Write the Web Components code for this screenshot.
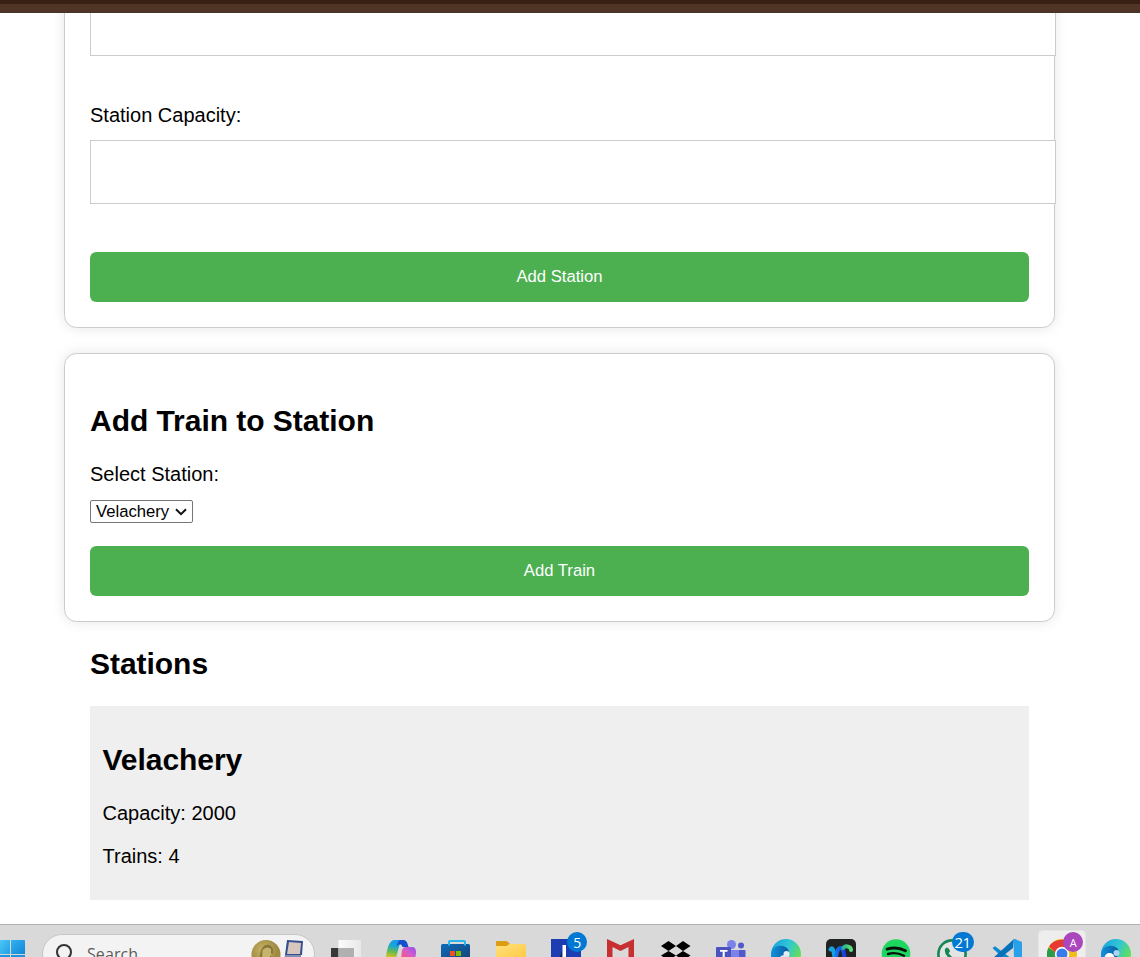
<!DOCTYPE html>
<html lang="en">
<head>
<meta charset="utf-8">
<title>Metro Stations</title>
<style>
html,body{margin:0;height:957px;overflow:hidden;background:#fff}
body{font:20px/23px "Liberation Sans",Arial,sans-serif;color:#000}
</style>
</head>
<body>
<metro-app></metro-app>
<script>
const define = (name, html) => customElements.define(name, class extends HTMLElement {
  constructor() {
    super();
    const t = document.createElement('template');
    t.innerHTML = html;
    this.attachShadow({mode: 'open'}).append(t.content.cloneNode(true));
  }
});

define('browser-edge', `<style>:host{display:block;height:8px;background:#503426;border-top:4px solid #382014;border-bottom:1px solid #49342a;flex:none}</style>`);

define('form-card', `<style>:host{display:block;box-sizing:border-box;width:991px;padding:25px;border:1px solid #ccc;border-radius:12.5px;background:#fff;box-shadow:0 0 12.5px rgba(0,0,0,.1)}</style><slot></slot>`);

define('section-title', `<style>:host{display:block}h2{margin:0;font-size:30px;line-height:34px;font-weight:700;letter-spacing:-.04px}</style><h2><slot></slot></h2>`);

define('number-field', `<style>:host{display:block}label{display:block;min-height:23px;margin-bottom:13px}input{display:block;box-sizing:border-box;width:966px;height:64px;border:1px solid #ccc;background:#fff;padding:12px;font:inherit;outline:0}</style><label><slot></slot></label><input aria-label="value">`);

define('action-button', `<style>:host{display:block}button{display:block;width:100%;height:50px;border:0;border-radius:6.25px;background:#4caf50;color:#fff;font:16.67px/19px "Liberation Sans",Arial,sans-serif;padding:0 0 1px}</style><button><slot></slot></button>`);

define('station-select', `<style>:host{display:flex;box-sizing:border-box;width:103px;height:23px;border:1px solid #767676;border-radius:2px;background:#fff;font-size:16.67px;line-height:21px;padding-left:5px;align-items:center}
svg{margin-left:5px;flex:none}</style><slot></slot><svg width="14" height="10" viewBox="0 0 14 10"><path d="M2 2.200l5 5 5-5" fill="none" stroke="#111" stroke-width="2"/></svg>`);

define('station-entry', `<style>:host{display:block;box-sizing:border-box;width:939px;height:194px;background:#efefef;padding:37px 12.5px 0}
section-title{margin-bottom:25px}p{margin:0 0 20px}</style><section-title><slot name="name"></slot></section-title><p><slot name="capacity"></slot></p><p><slot name="trains"></slot></p>`);

define('count-badge', `<style>:host{position:absolute;left:var(--x);top:8px;width:var(--w,20px);height:20px;border-radius:10px;background:var(--c,#0078d4);color:#fff;font:var(--f,14px)/21px "Open Sans","Noto Sans",sans-serif;text-align:center;letter-spacing:-.5px}</style><slot></slot>`);

const edge = id => `<svg viewBox="0 0 55 33"><defs><linearGradient id="${id}a" x1="0" x2="1" y2=".5"><stop stop-color="#159ddd"/><stop offset=".55" stop-color="#31c6d5"/><stop offset="1" stop-color="#66e052"/></linearGradient><linearGradient id="${id}b" x2="1"><stop stop-color="#1292dc"/><stop offset="1" stop-color="#075aa0"/></linearGradient></defs><circle cx="28" cy="30" r="15" fill="url(#${id}a)"/><path d="M13 31c0-5.500 4-9.200 9.500-9.200 5 0 8.500 3 8.500 7.200l-3 6H13z" fill="url(#${id}b)"/>`;

const icons = [
`<svg viewBox="0 0 55 33"><defs><linearGradient id="tv" x2="1"><stop stop-color="#fbfbfb"/><stop offset="1" stop-color="#e8e8e8"/></linearGradient></defs><path fill="#393735" d="M13 24h23v12H13z"/><path fill="url(#tv)" d="M20.500 16H43v20H20.500z"/><path fill="#b0b0b0" d="M20.500 24H36v12H20.500z"/></svg>`,
`<svg viewBox="0 0 55 33"><defs><linearGradient id="ca" gradientUnits="userSpaceOnUse" x1="24" y1="16" x2="20" y2="35"><stop stop-color="#1597f0"/><stop offset=".35" stop-color="#1ba9d0"/><stop offset=".65" stop-color="#6cb94c"/><stop offset="1" stop-color="#e6c81c"/></linearGradient><linearGradient id="cb" gradientUnits="userSpaceOnUse" x1="41" y1="23" x2="30" y2="35"><stop stop-color="#9a50ea"/><stop offset=".5" stop-color="#d65cc8"/><stop offset="1" stop-color="#f5587c"/></linearGradient></defs><path fill="url(#ca)" d="M13 35c0-7 3-19 8-19h9c-4 3-5 11-7 19z"/><path fill="#1550cc" d="M27 16h3.500c3 0 4 3 5 7h-6c-1-3-3-4-6-.500 1-4 2-6 3.500-6.500z"/><path fill="url(#cb)" d="M32 23h7c4 0 5 4 3 12H28l1-9q1-3 3-3z"/></svg>`,
`<svg viewBox="0 0 55 33"><defs><linearGradient id="st" x2="1" y2="1"><stop stop-color="#0c6bb8"/><stop offset="1" stop-color="#174273"/></linearGradient></defs><rect x="13" y="20" width="29" height="18" rx="1.500" fill="url(#st)"/><path d="M21 21.500V18q0-1 1-1h14q1 0 1 1v3.500" fill="none" stroke="#24b8ed" stroke-width="2"/><path fill="#f25022" d="M22 27h5v5h-5z"/><path fill="#7fba00" d="M28 27h5v5h-5z"/></svg>`,
`<svg viewBox="0 0 55 33"><defs><linearGradient id="fo" x2="1" y2="1"><stop stop-color="#ffe17c"/><stop offset="1" stop-color="#ffc943"/></linearGradient></defs><path fill="#dc9d12" d="M13 35V18q0-1 1-1h9q1 0 2 1l2 2-4 4z"/><path fill="url(#fo)" d="M13 35V22h10q1 0 2-1 1-1 2-1h14q2 0 2 2v13z"/></svg>`,
`<svg viewBox="0 0 55 33"><path fill="#1d3db2" d="M13 15h30v20H13z"/><path fill="#0a2450" d="M22 33l2-6v6z"/><path fill="#fff" d="M24.500 21h3.500v14h-3.500z"/></svg><count-badge style="--x:29px">5</count-badge>`,
`<svg viewBox="0 0 55 33"><path fill="#c72f30" d="M14 35V15l13.500 6.200L41 15v20h-5.500V23l-8 4-8-4v12z"/></svg>`,
`<svg viewBox="0 0 55 33"><path d="M13 22l7.500-5 7.500 5 7-5 7.500 5-7.500 5-7-5-7.500 5zM13 31.500l7.500-4.500 7.500 4.500 7-4.500 7.500 4.500-7.500 5-7-5-7.500 5z"/></svg>`,
`<svg viewBox="0 0 55 33"><circle cx="28.500" cy="20.500" r="4.500" fill="#7b83eb"/><circle cx="38" cy="21.500" r="3" fill="#5059c9"/><rect x="33" y="26" width="9.500" height="12" rx="1" fill="#5059c9"/><path fill="#7b83eb" d="M21 26h15v12H21z"/><rect x="13" y="23" width="15" height="15" rx="1" fill="#4b53bc"/><path fill="#fff" d="M17 26h7.500v1.700h-2.800V34h-2v-6.300H17z"/></svg>`,
edge('e')+`<circle cx="28.500" cy="30" r="3" fill="#e6edf3"/><path d="M22 34q0-3 5-3h4v4h-9z" fill="#dce7f0"/></svg>`,
`<svg viewBox="0 0 55 33"><defs><linearGradient id="we" gradientUnits="userSpaceOnUse" x1="16" y1="0" x2="33" y2="0"><stop stop-color="#14a5e4"/><stop offset=".4" stop-color="#1673f4"/><stop offset="1" stop-color="#1636d8"/></linearGradient><linearGradient id="wg" gradientUnits="userSpaceOnUse" x1="28" y1="0" x2="38" y2="0"><stop stop-color="#1b9f9a"/><stop offset="1" stop-color="#5ce274"/></linearGradient></defs><rect x="13" y="15" width="30" height="30" rx="5" fill="#202222"/><g fill="none" stroke-width="4" stroke-linecap="round"><path d="M17.500 25.500q1-2.500 2.500 0c1 3 1 6 2 10" stroke="#15a3de"/><path d="M22.500 36c1-6 2-12 5-12s3.500 5 4.500 12" stroke="url(#we)"/><path d="M30 24c3-3 8-1.500 8 2" stroke="url(#wg)"/></g></svg>`,
`<svg viewBox="0 0 55 33"><circle cx="28" cy="29.500" r="14.300" fill="#1ed760"/><g fill="none" stroke="#07120b" stroke-linecap="round"><path d="M19 25.200q10-3 18.500 1.600" stroke-width="2.800"/><path d="M20 30q8-2.300 16 1.700" stroke-width="2.400"/></g></svg>`,
`<svg viewBox="0 0 55 33"><circle cx="29" cy="30" r="13.600" fill="#e2e5e3" stroke="#168653" stroke-width="2.600"/><path fill="#168653" d="M22 25q2-3 4 0l1 2q0 1-1.500 2.200L30 34h-4q-5-4-4-9z"/></svg><count-badge style="--x:28.500px;--w:22px;--f:15px">21</count-badge>`,
`<svg viewBox="0 0 55 33"><path fill="#0b88ce" d="M14.500 24l2.500-1.800L34 35h-8z"/><path fill="#0872b8" d="M36 15l-1 9-14 11h-7z"/><path fill="#28a0ea" d="M35.500 15h1.500l7 3v17h-8z"/></svg>`,
`<svg viewBox="0 0 55 33"><rect x="5.500" y="6.500" width="47" height="40" rx="4" fill="#eee" stroke="#e5e5e5"/><circle cx="29" cy="30" r="15" fill="#f2bd18"/><path fill="#2b9b4b" d="M15.500 23.500Q13 28 14.500 35h11l-2-6z"/><path fill="#e73a30" d="M16 22.500a15 15 0 0 1 26 1.500H29l-6 5z"/><circle cx="29" cy="30" r="7.200" fill="#fff"/><circle cx="29" cy="30" r="5.500" fill="#3a7bea"/></svg><count-badge style="--x:30px;--c:#ab47bc;--f:11px">A</count-badge>`,
edge('f')+`<circle cx="28.500" cy="29" r="3" fill="#a9d5f1"/><circle cx="21.500" cy="34" r="5" fill="#fff"/></svg>`];

define('task-icons', `<style>:host{display:flex;flex:none;width:825px;margin-left:3px}div{position:relative;width:55px;height:33px;flex:none}svg{display:block;width:55px;height:33px}</style>${icons.map(i=>`<div>${i}</div>`).join('')}`);

define('search-pill', `<style>:host{display:flex;box-sizing:border-box;width:273px;height:40px;margin:10px 0 0 17px;border:1px solid #c6c6c6;border-radius:20px;background:#f3f3f3;flex:none;font:16px/22px "Open Sans","Noto Sans",sans-serif;color:#5d5d5d}
.lens{margin:8px 0 0 12px;flex:none}span{margin:8px 0 0 10px;width:160px;letter-spacing:.1px}.art{margin:4px 0 0 2px;flex:none}</style>
<svg class="lens" width="22" height="24" viewBox="0 0 22 24"><circle cx="9" cy="9" r="7" fill="none" stroke="#333" stroke-width="2"/><path d="M14 14l5 5" stroke="#333" stroke-width="2"/></svg><span><slot></slot></span>
<svg class="art" width="56" height="34" viewBox="0 0 56 34"><defs><radialGradient id="co" cx=".4" cy=".35"><stop stop-color="#c9b468"/><stop offset="1" stop-color="#9d8940"/></radialGradient></defs><circle cx="17" cy="15.500" r="14.500" fill="url(#co)"/><path d="M12 22q-2-3-1-6l1-5q3-6 8-5 5 2 4 8l-2 3 1 6z" fill="#89763a"/><path d="M13.500 11q4-4.500 8.500-1v4l1 2-2 1v3h-4l-1 3-3-1z" fill="#c6b46a"/><path d="M38 1l16 1-1 14H36z" fill="#334f8f"/><path d="M40 3l12 1-1 11H38z" fill="#d6c6bd"/><path d="M36 16h16v4H35z" fill="#8290b0"/></svg>`);

define('task-bar', `<style>:host{display:flex;box-sizing:border-box;height:33px;background:#d9d9d9;box-shadow:inset 0 1px #b0b0b0;overflow:hidden;flex:none}.win{flex:none;margin-top:16px}search-pill{margin-top:10px}</style>
<svg class="win" width="25" height="17" viewBox="0 0 25 17"><defs><linearGradient id="w1" x2="1" y2="1"><stop stop-color="#4cc7f7"/><stop offset="1" stop-color="#229fe4"/></linearGradient><linearGradient id="w2" x2="1" y2="1"><stop stop-color="#35b2ee"/><stop offset="1" stop-color="#0f86d8"/></linearGradient></defs><path fill="url(#w1)" d="M0 0h10v14H0z"/><path fill="url(#w2)" d="M11 0h13q1 0 1 1v13H11z"/><path fill="#1a94dd" d="M0 15h10v2H0zM11 15h14v2H11z"/></svg>
<search-pill>Search</search-pill><task-icons></task-icons>`);

define('metro-app', `<style>:host{display:flex;flex-direction:column;width:1140px;height:957px;overflow:hidden}
main{height:911px;box-sizing:border-box;padding-left:64px;overflow:hidden}
.first{margin-top:-86px;height:401px;padding-top:28px}
.first number-field{margin-bottom:48px}
.train{margin-top:25px;height:269px;padding-top:50px}
.train section-title{margin-bottom:25px}
.train p{margin:0 0 14px}
.train station-select{margin-bottom:23px}
.list{margin:25px 0 0 26px}
.list station-entry{margin-top:25px}</style>
<browser-edge></browser-edge>
<main>
<form-card class="first"><number-field></number-field><number-field>Station Capacity:</number-field><action-button>Add Station</action-button></form-card>
<form-card class="train"><section-title>Add Train to Station</section-title><p>Select Station:</p><station-select>Velachery</station-select><action-button>Add Train</action-button></form-card>
<div class="list"><section-title>Stations</section-title><station-entry><span slot="name">Velachery</span><span slot="capacity">Capacity: 2000</span><span slot="trains">Trains: 4</span></station-entry></div>
</main>
<task-bar></task-bar>`);
</script>
</body>
</html>
